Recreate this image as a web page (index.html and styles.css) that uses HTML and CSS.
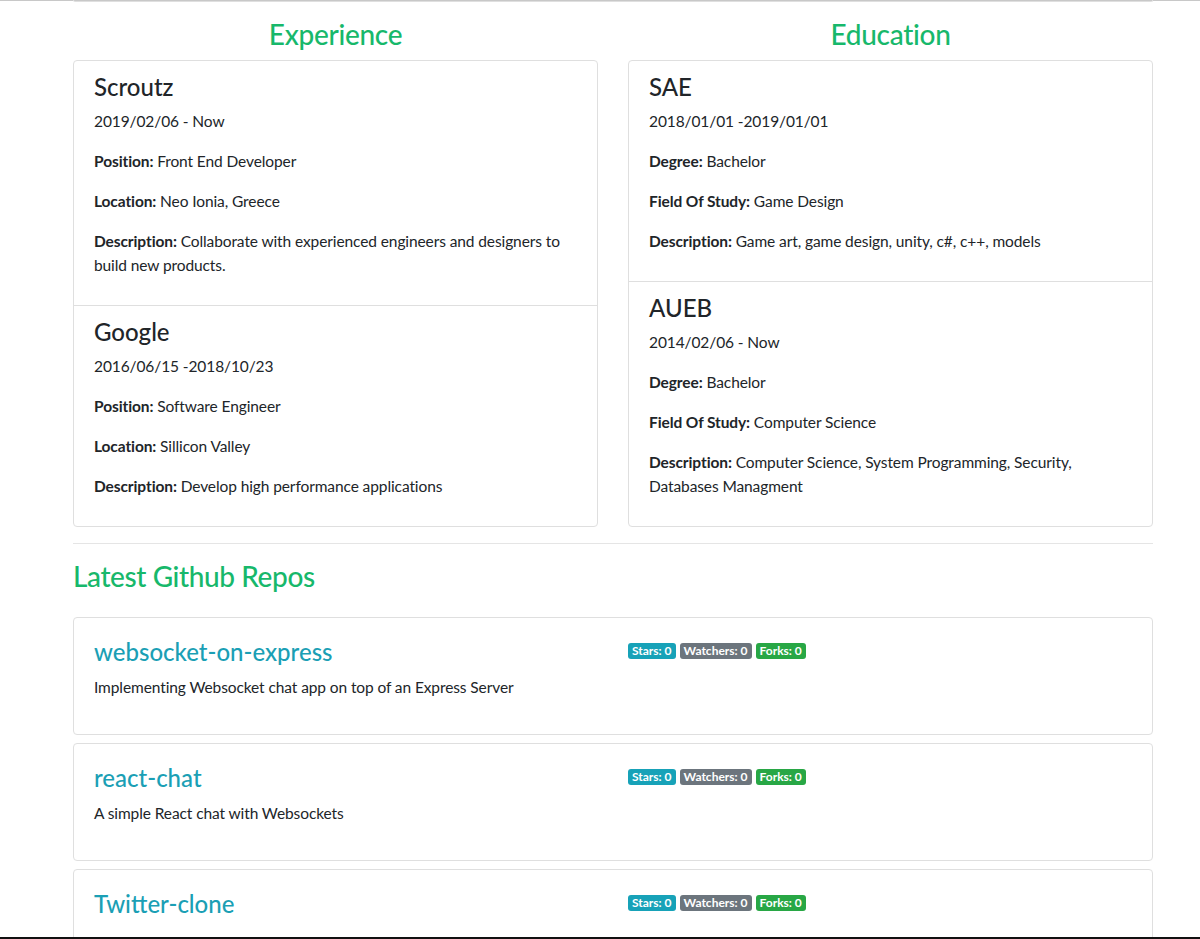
FILE: index.html
```html
<!DOCTYPE html>
<html>
<head>
<meta charset="utf-8">
<link rel="stylesheet" href="styles.css">
</head>
<body>
<div class="topline"></div>
<div class="page">
  <div class="prev-card"></div>
  <div class="two-cols">
    <section class="col">
      <h2 class="section-title">Experience</h2>
      <div class="card">
        <div class="item">
          <h3 class="item-title">Scroutz</h3>
          <p>2019/02/06 - Now</p>
          <p><strong>Position:</strong> Front End Developer</p>
          <p><strong>Location:</strong> Neo Ionia, Greece</p>
          <p><strong>Description:</strong> Collaborate with experienced engineers and designers to build new products.</p>
        </div>
        <div class="item">
          <h3 class="item-title">Google</h3>
          <p>2016/06/15 -2018/10/23</p>
          <p><strong>Position:</strong> Software Engineer</p>
          <p><strong>Location:</strong> Sillicon Valley</p>
          <p><strong>Description:</strong> Develop high performance applications</p>
        </div>
      </div>
    </section>
    <section class="col">
      <h2 class="section-title">Education</h2>
      <div class="card">
        <div class="item">
          <h3 class="item-title">SAE</h3>
          <p>2018/01/01 -2019/01/01</p>
          <p><strong>Degree:</strong> Bachelor</p>
          <p><strong>Field Of Study:</strong> Game Design</p>
          <p><strong>Description:</strong> Game art, game design, unity, c#, c++, models</p>
        </div>
        <div class="item">
          <h3 class="item-title">AUEB</h3>
          <p>2014/02/06 - Now</p>
          <p><strong>Degree:</strong> Bachelor</p>
          <p><strong>Field Of Study:</strong> Computer Science</p>
          <p><strong>Description:</strong> Computer Science, System Programming, Security, Databases Managment</p>
        </div>
      </div>
    </section>
  </div>
  <hr class="divider">
  <h2 class="repos-title">Latest Github Repos</h2>
  <div class="repo">
    <div class="repo-main">
      <h3 class="repo-name">websocket-on-express</h3>
      <p>Implementing Websocket chat app on top of an Express Server</p>
    </div>
    <div class="repo-badges">
      <span class="badge info">Stars: 0</span>
      <span class="badge secondary">Watchers: 0</span>
      <span class="badge success">Forks: 0</span>
    </div>
  </div>
  <div class="repo">
    <div class="repo-main">
      <h3 class="repo-name">react-chat</h3>
      <p>A simple React chat with Websockets</p>
    </div>
    <div class="repo-badges">
      <span class="badge info">Stars: 0</span>
      <span class="badge secondary">Watchers: 0</span>
      <span class="badge success">Forks: 0</span>
    </div>
  </div>
  <div class="repo">
    <div class="repo-main">
      <h3 class="repo-name">Twitter-clone</h3>
    </div>
    <div class="repo-badges">
      <span class="badge info">Stars: 0</span>
      <span class="badge secondary">Watchers: 0</span>
      <span class="badge success">Forks: 0</span>
    </div>
  </div>
</div>
<div class="bottomline"></div>
</body>
</html>
```

FILE: styles.css
```css
* { box-sizing: border-box; }
html, body { margin: 0; padding: 0; }
body {
  font-family: Lato, "Open Sans", sans-serif;
  font-size: 15.5px;
  letter-spacing: -0.1px;
  line-height: 24px;
  color: #212529;
  background: #fff;
  overflow: hidden;
  height: 939px;
}
.topline {
  height: 1px;
  background: #c8c8c8;
}
.page {
  width: 1080px;
  margin-left: 73px;
}
.prev-card {
  height: 2px;
  border: 1px solid #dfdfdf;
  border-top: none;
  border-radius: 0 0 4px 4px;
  margin-top: -1px;
}
.two-cols {
  display: flex;
  gap: 30px;
}
.col { flex: 1; }
.section-title {
  margin: 16px 0 8px;
  font-size: 28px;
  font-weight: 500;
  letter-spacing: -0.3px;
  line-height: 1.2;
  color: #17b86b;
  text-align: center;
  height: 34px;
}
.card {
  border: 1px solid #dfdfdf;
  border-radius: 4px;
}
.item {
  padding: 12px 20px;
}
.item + .item { border-top: 1px solid #dfdfdf; }
.item-title {
  margin: 0 0 7px;
  font-size: 24px;
  font-weight: 500;
  letter-spacing: 0;
  line-height: 1.2;
}
.item p { margin: 0 0 16px; }
strong { font-weight: 700; }
.divider {
  border: 0;
  border-top: 1px solid #e5e5e5;
  margin: 16px 0 16px;
}
.repos-title {
  margin: 0 0 24px;
  font-size: 28px;
  font-weight: 500;
  letter-spacing: -0.4px;
  line-height: 1.2;
  color: #17b86b;
}
.repo {
  border: 1px solid #dfdfdf;
  border-radius: 4px;
  padding: 20px 20px 4px;
  display: flex;
  gap: 30px;
  margin-bottom: 8px;
  height: 118px;
}
.repo-main { flex: 1; }
.repo-badges { flex: 1; padding-top: 5px; display: flex; gap: 4px; align-items: flex-start; }
.repo-name {
  margin: 0 0 8px;
  font-size: 24px;
  font-weight: 500;
  letter-spacing: 0;
  line-height: 1.2;
  color: #1b9fb5;
}
.repo-main p { margin: 0 0 16px; }
.badge {
  display: inline-block;
  padding: 2px 4px;
  font-size: 12px;
  font-weight: 700;
  letter-spacing: 0;
  line-height: 12px;
  color: #fff;
  border-radius: 3px;
}
.info { background: #17a2b8; }
.secondary { background: #6c757d; }
.success { background: #28a745; }
.bottomline {
  position: fixed;
  left: 0;
  right: 0;
  bottom: 0;
  height: 2px;
  background: #111;
}
```
